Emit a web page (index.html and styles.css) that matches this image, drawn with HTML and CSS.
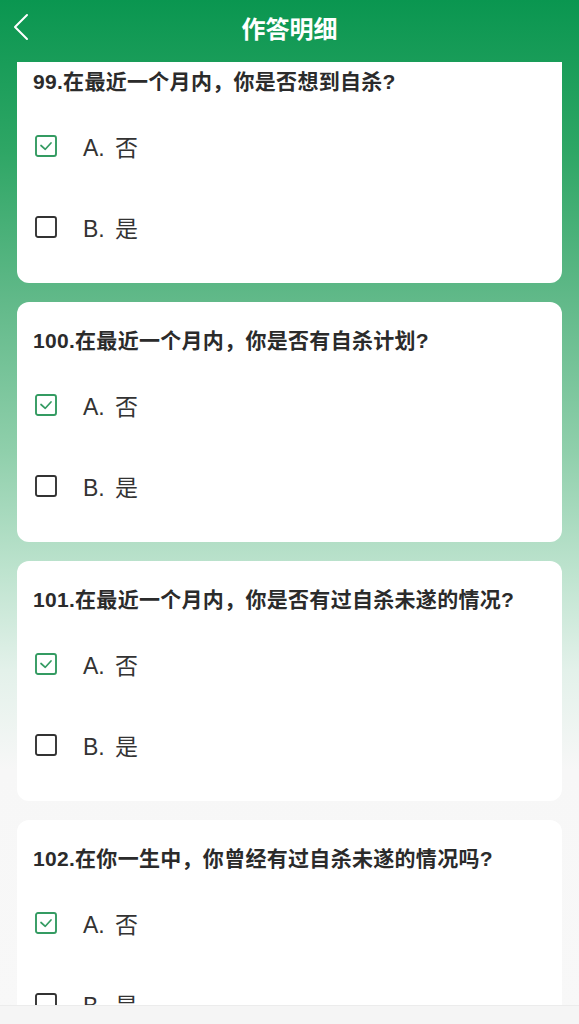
FILE: index.html
```html
<!DOCTYPE html>
<html lang="zh-CN">
<head>
<meta charset="utf-8">
<title>作答明细</title>
<link rel="stylesheet" href="styles.css">
</head>
<body>
<header class="topbar">
  <span class="back">
    <svg width="18" height="28" viewBox="0 0 18 28"><polyline points="15,2 3,14 15,26" fill="none" stroke="#fff" stroke-width="2" stroke-linecap="round" stroke-linejoin="round"/></svg>
  </span>
  <h1 class="title">作答明细</h1>
</header>

<main class="list">
  <section class="card">
    <p class="question">99.在最近一个月内，你是否想到自杀?</p>
    <div class="option"><span class="box"><svg width="22" height="22" viewBox="0 0 22 22"><rect x="1" y="1" width="20" height="20" rx="2" fill="none" stroke="#349b62" stroke-width="1.9"/><polyline points="6,10.5 10.3,14.3 16,8" fill="none" stroke="#349b62" stroke-width="1.7" stroke-linecap="round" stroke-linejoin="round"/></svg></span><span class="label">A. 否</span></div>
    <div class="option"><span class="box"><svg width="22" height="22" viewBox="0 0 22 22"><rect x="1" y="1" width="20" height="20" rx="2" fill="none" stroke="#333" stroke-width="1.9"/></svg></span><span class="label">B. 是</span></div>
  </section>

  <section class="card">
    <p class="question">100.在最近一个月内，你是否有自杀计划?</p>
    <div class="option"><span class="box"><svg width="22" height="22" viewBox="0 0 22 22"><rect x="1" y="1" width="20" height="20" rx="2" fill="none" stroke="#349b62" stroke-width="1.9"/><polyline points="6,10.5 10.3,14.3 16,8" fill="none" stroke="#349b62" stroke-width="1.7" stroke-linecap="round" stroke-linejoin="round"/></svg></span><span class="label">A. 否</span></div>
    <div class="option"><span class="box"><svg width="22" height="22" viewBox="0 0 22 22"><rect x="1" y="1" width="20" height="20" rx="2" fill="none" stroke="#333" stroke-width="1.9"/></svg></span><span class="label">B. 是</span></div>
  </section>

  <section class="card">
    <p class="question">101.在最近一个月内，你是否有过自杀未遂的情况?</p>
    <div class="option"><span class="box"><svg width="22" height="22" viewBox="0 0 22 22"><rect x="1" y="1" width="20" height="20" rx="2" fill="none" stroke="#349b62" stroke-width="1.9"/><polyline points="6,10.5 10.3,14.3 16,8" fill="none" stroke="#349b62" stroke-width="1.7" stroke-linecap="round" stroke-linejoin="round"/></svg></span><span class="label">A. 否</span></div>
    <div class="option"><span class="box"><svg width="22" height="22" viewBox="0 0 22 22"><rect x="1" y="1" width="20" height="20" rx="2" fill="none" stroke="#333" stroke-width="1.9"/></svg></span><span class="label">B. 是</span></div>
  </section>

  <section class="card">
    <p class="question">102.在你一生中，你曾经有过自杀未遂的情况吗?</p>
    <div class="option"><span class="box"><svg width="22" height="22" viewBox="0 0 22 22"><rect x="1" y="1" width="20" height="20" rx="2" fill="none" stroke="#349b62" stroke-width="1.9"/><polyline points="6,10.5 10.3,14.3 16,8" fill="none" stroke="#349b62" stroke-width="1.7" stroke-linecap="round" stroke-linejoin="round"/></svg></span><span class="label">A. 否</span></div>
    <div class="option"><span class="box"><svg width="22" height="22" viewBox="0 0 22 22"><rect x="1" y="1" width="20" height="20" rx="2" fill="none" stroke="#333" stroke-width="1.9"/></svg></span><span class="label">B. 是</span></div>
  </section>
</main>

<footer class="bottombar"></footer>
</body>
</html>
```

FILE: styles.css
```css
html, body {
  margin: 0;
  padding: 0;
}

body {
  width: 579px;
  min-height: 1024px;
  font-family: "Liberation Sans", "Noto Sans CJK SC", sans-serif;
  background: linear-gradient(180deg, #0a9650 0px, #2ea665 150px, #61b989 300px, #8fcfab 450px, #bde3ce 570px, #e3f1ea 670px, #f7f7f7 770px, #f8f8f8 1024px) fixed;
  overflow: hidden;
}

.topbar {
  position: fixed;
  top: 0;
  left: 0;
  width: 579px;
  height: 62px;
  z-index: 10;
  display: flex;
  align-items: center;
  justify-content: center;
  background: linear-gradient(180deg, #0a9650 0px, #2ea665 150px, #61b989 300px, #8fcfab 450px, #bde3ce 570px, #e3f1ea 670px, #f7f7f7 770px, #f8f8f8 1024px) fixed;
}

.back {
  position: absolute;
  left: 12px;
  top: 13px;
  display: flex;
}

.title {
  margin: 0;
  margin-top: -8px;
  font-size: 24px;
  font-weight: bold;
  color: #fff;
}

.list {
  display: flex;
  flex-direction: column;
  gap: 19px;
  padding: 43px 17px 0;
}

.card {
  background: #fff;
  border-radius: 12px;
  height: 240px;
  box-sizing: border-box;
  padding: 24px 16px 12px;
  display: flex;
  flex-direction: column;
}

.question {
  margin: 0 0 8px;
  font-size: 21px;
  line-height: 30px;
  font-weight: bold;
  color: #2b2b2b;
  letter-spacing: 0.3px;
}

.option {
  height: 81px;
  display: flex;
  align-items: center;
  padding-left: 2px;
}

.box {
  display: flex;
  width: 22px;
  height: 22px;
}

.label {
  margin-left: 26px;
  font-size: 23px;
  color: #333;
  word-spacing: 4px;
}

.bottombar {
  position: fixed;
  left: 0;
  bottom: 0;
  width: 579px;
  height: 18px;
  background: #f5f5f5;
  border-top: 1px solid #ececec;
  z-index: 10;
}
```
